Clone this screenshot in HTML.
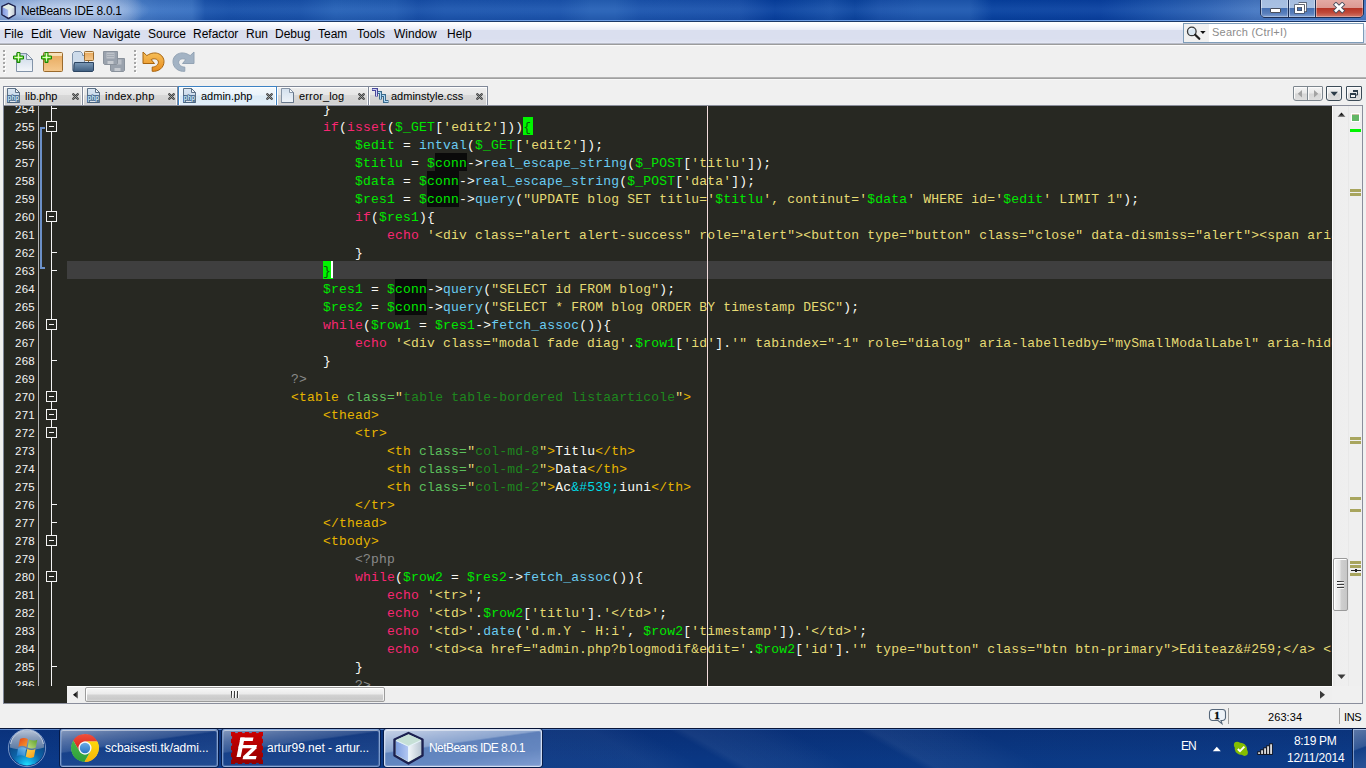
<!DOCTYPE html>
<html><head><meta charset="utf-8"><title>NetBeans IDE 8.0.1</title>
<style>
*{box-sizing:border-box;margin:0;padding:0}
html,body{width:1366px;height:768px;overflow:hidden;background:#f0f0f0;font-family:"Liberation Sans",sans-serif;}
.abs{position:absolute}
#titlebar{position:absolute;left:0;top:0;width:1366px;height:22px;overflow:hidden;background:linear-gradient(90deg,#7fa2d6 0px,#87a8da 110px,#6d97d2 128px,#437ac6 142px,#3b73c3 160px,#3770c1 192px,#1a54ad 205px,#154fa9 230px,#1852ab 300px,#2460b6 335px,#215cb3 395px,#164fa9 418px,#1b55ae 445px,#1a54ae 560px,#2560b6 590px,#2560b6 615px,#1a54ae 640px,#1850ab 740px,#063f9e 775px,#0d47a3 800px,#1650aa 830px,#0a449f 855px,#1851ab 880px,#1d58b0 920px,#1d58b0 970px,#0641a0 992px,#0840a0 1100px,#1851ab 1150px,#2c62b5 1205px,#4577c2 1255px,#4a7cc6 1366px)}
#titlebar .streak{position:absolute;top:0;height:22px;}
#titletext{position:absolute;left:21px;top:4px;font-size:12px;letter-spacing:-0.3px;line-height:15px;color:#000;white-space:pre}
#menubar{position:absolute;left:0;top:22px;width:1366px;height:21px;background:linear-gradient(180deg,#ffffff 0,#fcfcfe 2px,#f3f4fb 5px,#e9ecf7 8px,#dadfef 8.5px,#dadfef 17px,#dfe3f2 20px,#e6e9f5 21px)}
#menubar span{position:absolute;top:5px;font-size:12px;line-height:15px;color:#000;white-space:pre}
#menuline{position:absolute;left:0;top:43px;width:1366px;height:3px;background:linear-gradient(180deg,#b9bdc9 0,#b9bdc9 1px,#9c9c9c 1px,#9c9c9c 2px,#fdfdfd 2px,#fdfdfd 3px)}
#toolbar{position:absolute;left:0;top:0;width:0;height:0}
.grip{position:absolute;width:3px;height:24px;background-image:repeating-linear-gradient(180deg,#a6a6a6 0,#a6a6a6 2px,transparent 2px,transparent 4px),repeating-linear-gradient(180deg,#fff 0,#fff 2px,transparent 2px,transparent 4px);background-size:2px 22px,2px 22px;background-position:0 0,1px 1px;background-repeat:no-repeat}
#toolline{position:absolute;left:0;top:77px;width:1366px;height:3px;background:linear-gradient(180deg,#b4b4b4 0,#b4b4b4 1px,#a0a0a0 1px,#a0a0a0 2px,#f8f8f8 2px,#f8f8f8 3px)}
/* tabs */
.tab{position:absolute;top:86px;height:19px;border:1px solid #808898;border-bottom:none;background:linear-gradient(180deg,#f0f0f0 0,#ebebeb 2px,#e6e6e6 8px,#d8d8d8 8.500px,#d0d0d0 17px,#e2e2e2 18px);box-shadow:inset 1px 1px 0 #fdfdfd,inset -1px 0 0 #f6f6f6;font-size:11px;color:#000}
.tab.active{height:20px;background:linear-gradient(180deg,#f4f9fd 0,#eaf3fa 8px,#dcebf6 9px,#e3eff8 19px);border-color:#3d82c4;box-shadow:inset 1px 1px 0 #fff,inset -1px 0 0 #fff}
.tab .lbl{position:absolute;top:2px;line-height:15px;white-space:pre}
.tab .ti{position:absolute;left:3px;top:1px}
.tab .tx{position:absolute;top:6px}
/* editor */
#editor{position:absolute;left:4px;top:106px;width:1328px;height:580px;background:#272822;overflow:hidden}
#edtop{position:absolute;left:3px;top:105px;width:1360px;height:1px;background:#8a8e9c}
#nums{position:absolute;left:0;top:-6px;width:31px;text-align:right;font-family:"Liberation Sans",sans-serif;font-size:11.500px;letter-spacing:.25px;line-height:18px;color:#f4f4f4}
#nums div{height:18px}
#gutline{position:absolute;left:34px;top:0;width:1px;height:580px;background:#b4b4b4}
.fl{position:absolute;left:47px;top:0;width:1px;height:580px;background:#f4f4f4}
.ft{position:absolute;left:47px;width:6px;height:1px;background:#f4f4f4}
.fb{position:absolute;left:42px;width:11px;height:11px;border:1px solid #f4f4f4;background:#272822}
.fb i{position:absolute;left:2px;top:4px;width:5px;height:1px;background:#f4f4f4}
.bk1{position:absolute;left:36px;top:21px;width:2px;height:142px;background:#6b90c8}
.bk2{position:absolute;left:36px;top:21px;width:5px;height:2px;background:#6b90c8}
.bk3{position:absolute;left:36px;top:161px;width:5px;height:2px;background:#6b90c8}
.occ{position:absolute;height:18px;background:#0a0a0a}
.brk{position:absolute;height:18px;background:#00f400}
#code{position:absolute;left:63px;top:-5px;font-family:"Liberation Mono",monospace;font-size:13px;letter-spacing:0.2px;line-height:18px;color:#f8f8f2;white-space:pre}
#code .ln{height:18px;white-space:pre}
#curline{position:absolute;left:63px;top:155px;width:1265px;height:18px;background:#3f3f3f}
.k{color:#f92672}.v{color:#00e800}.f{color:#6accf2}.s{color:#e6db74}.t{color:#e6b400}.a{color:#5cc05c}.av{color:#1e861e}.c{color:#8a8a8a}.e{color:#00dce8}
.br{color:#0a5c0a}
#margin{position:absolute;left:703px;top:0;width:1px;height:580px;background:#f2dcdc}
#caret{position:absolute;left:327px;top:155px;width:2px;height:17px;background:#fff}
.nb{position:absolute;top:86px;height:15px;border:1px solid #3c4b57;border-radius:1px 1px 3px 3px;background:linear-gradient(180deg,#f4f4f4 0,#e9e9e9 6px,#d6d6d6 7px,#dedede 13px);box-shadow:inset 1px 1px 0 #fbfbfb,inset -1px 0 0 #f0f0f0}
.ob{position:absolute;left:1px;width:11px;height:3px;background:#a8a55e}
/* scrollbars */
#vsb{position:absolute;left:1332px;top:106px;width:16px;height:580px;background:linear-gradient(90deg,#e6e6e6 0,#e9e9e9 2px,#eeeeee 4px,#efefef 16px)}
#stripe{position:absolute;left:1348px;top:106px;width:14px;height:580px;background:#efefef;border-left:1px solid #e8e8e8}
#rborder{position:absolute;left:1362px;top:105px;width:1px;height:598px;background:#8a8d9b}
#hsb{position:absolute;left:67px;top:686px;width:1265px;height:17px;background:#efefef}
#gutbot{position:absolute;left:4px;top:686px;width:63px;height:17px;background:#272822}
#bborder{position:absolute;left:3px;top:703px;width:1360px;height:1px;background:#8a8e9c}
#lborder{position:absolute;left:3px;top:105px;width:1px;height:598px;background:#808898}
#status{position:absolute;left:0;top:704px;width:1366px;height:24px;background:#f0f0f0;font-size:12px;color:#000}
#taskbar{position:absolute;left:0;top:728px;width:1366px;height:40px;overflow:hidden;background:linear-gradient(90deg,#0c3a88 0,#0b3986 300px,#0a3783 700px,#0b3984 1000px,#0d3c88 1366px)}
.tb{position:absolute;top:1px;height:38px;border:1px solid rgba(150,180,225,.75);border-radius:3px;background:linear-gradient(172deg,rgba(255,255,255,.50) 0,rgba(255,255,255,.30) 20%,rgba(255,255,255,.17) 38%,rgba(255,255,255,.05) 41%,rgba(255,255,255,.09) 100%);box-shadow:inset 0 1px 0 rgba(255,255,255,.38),inset 0 0 0 1px rgba(255,255,255,.16),0 0 0 1px rgba(4,16,48,.7)}
.tb.act{border-color:rgba(215,226,244,.95);background:linear-gradient(172deg,rgba(242,247,255,.82) 0,rgba(228,238,255,.72) 20%,rgba(213,230,254,.64) 38%,rgba(180,207,248,.50) 41%,rgba(185,210,250,.52) 70%,rgba(200,218,255,.62) 100%)}
.tl{position:absolute;top:13px;font-size:12px;line-height:15px;color:#fff;white-space:pre;letter-spacing:-.2px}
</style></head><body>
<div id="titlebar"><div class="abs" style="left:0;top:0;width:150px;height:20px;background:radial-gradient(ellipse 84px 20px at 66px 10px,rgba(205,220,244,.85) 0,rgba(178,200,234,.75) 50%,rgba(150,180,226,.35) 80%,rgba(130,165,218,0) 100%)"></div>
<div class="abs" style="left:0;top:0;width:1366px;height:20px;background:linear-gradient(180deg,rgba(0,0,30,.06) 0,rgba(255,255,255,.05) 45%,rgba(255,255,255,.04) 60%,rgba(0,0,40,.08) 100%)"></div>
<div class="abs" style="left:0;top:20px;width:1366px;height:1px;background:linear-gradient(90deg,#c2d2ec 0,#b5c9ea 120px,#6d9be0 220px,#6a9ae2 1200px,#8db0e6 1366px)"></div>
<div class="abs" style="left:0;top:21px;width:1366px;height:1px;background:#1b3868"></div>
<svg class="abs" style="left:0;top:2px" width="18" height="18" viewBox="0 0 18 18">
<defs><linearGradient id="cl" x1="0" x2="1"><stop offset="0" stop-color="#8198e0"/><stop offset="1" stop-color="#b4c6f0"/></linearGradient>
<linearGradient id="cr" x1="0" x2="1"><stop offset="0" stop-color="#f4f8fa"/><stop offset="1" stop-color="#c3cdd6"/></linearGradient></defs>
<path d="M8.5 1.5 L15 4.6 L15 12.6 L8.5 16.4 L2 12.6 L2 4.6 Z" fill="#dfeae4" stroke="#20244e" stroke-width="1.700" stroke-linejoin="round"/>
<path d="M2.6 5.2 L8.5 8 L8.5 15.6 L2.6 12.2 Z" fill="url(#cl)"/>
<path d="M8.5 8 L14.4 5.2 L14.4 12.2 L8.5 15.6 Z" fill="url(#cr)"/>
<path d="M2.8 4.8 L8.5 2.2 L14.2 4.8 L8.5 7.6 Z" fill="#e2ede6"/>
</svg>
<!-- window buttons -->
<div class="abs" style="left:1260px;top:-1px;width:104px;height:19px;border:1px solid #1c2e55;border-radius:0 0 5px 5px;overflow:hidden;background:#1c2e55">
 <div class="abs" style="left:0;top:0;width:27px;height:17px;background:linear-gradient(180deg,#a5bde0 0,#a9c1e3 48%,#4670b2 50%,#5a80bd 80%,#86a4d4 100%);box-shadow:inset 1px 0 0 rgba(255,255,255,.45),inset -1px 0 0 rgba(255,255,255,.35),inset 0 -1px 0 rgba(255,255,255,.3)"></div>
 <div class="abs" style="left:28px;top:0;width:26px;height:17px;background:linear-gradient(180deg,#a5bde0 0,#a9c1e3 48%,#4670b2 50%,#5a80bd 80%,#86a4d4 100%);box-shadow:inset 1px 0 0 rgba(255,255,255,.45),inset -1px 0 0 rgba(255,255,255,.35),inset 0 -1px 0 rgba(255,255,255,.3)"></div>
 <div class="abs" style="left:55px;top:0;width:47px;height:17px;background:linear-gradient(180deg,#e3a9a3 0,#dc9891 48%,#b63527 50%,#c04a3a 75%,#d0796c 100%);box-shadow:inset 1px 0 0 rgba(255,255,255,.4),inset -1px 0 0 rgba(255,255,255,.3),inset 0 -1px 0 rgba(255,255,255,.3)"></div>
</div>
<div class="abs" style="left:1270px;top:8px;width:11px;height:5px;background:#fff;border:1px solid #4a4f5c;border-radius:1px"></div>
<svg class="abs" style="left:1294px;top:2px" width="14" height="13" viewBox="0 0 14 13">
<path d="M4.6 1.8h6.8v6.6h-1.6" fill="none" stroke="#454b58" stroke-width="3"/>
<path d="M4.6 1.8h6.8v6.6h-1.6" fill="none" stroke="#fff" stroke-width="1.5"/>
<rect x="2" y="4" width="7" height="6" fill="none" stroke="#454b58" stroke-width="3.4"/>
<rect x="2" y="4" width="7" height="6" fill="none" stroke="#fff" stroke-width="2"/>
</svg>
<svg class="abs" style="left:1332px;top:2px" width="15" height="12" viewBox="0 0 15 12">
<path d="M4 2.6 L10.2 8.6 M10.2 2.6 L4 8.6" stroke="#4b4f5e" stroke-width="4.4" stroke-linecap="square"/>
<path d="M4 2.6 L10.2 8.6 M10.2 2.6 L4 8.6" stroke="#fff" stroke-width="2.7" stroke-linecap="square"/>
</svg>
</div>
<div id="titletext">NetBeans IDE 8.0.1</div>
<div id="menubar">
<span style="left:4px">File</span><span style="left:31px">Edit</span><span style="left:60px">View</span><span style="left:93px">Navigate</span><span style="left:148px">Source</span><span style="left:193px">Refactor</span><span style="left:246px">Run</span><span style="left:275px">Debug</span><span style="left:318px">Team</span><span style="left:357px">Tools</span><span style="left:394px">Window</span><span style="left:447px">Help</span>
<div class="abs" style="left:1183px;top:1px;width:181px;height:20px;border:1px solid #7f9db9;background:#fff">
<div class="abs" style="left:0;top:0;width:25px;height:18px;background:#f0f0f0"></div>
<svg class="abs" style="left:1px;top:1px" width="22" height="17" viewBox="0 0 22 17">
<circle cx="6.800" cy="6.400" r="4.300" fill="#dbe8f3" stroke="#3a3a3a" stroke-width="1.300"/>
<path d="M4.200 5.200a3 3 0 0 1 3-1.600" stroke="#fff" stroke-width="1" fill="none"/>
<path d="M10.200 9.800L14.300 13.800" stroke="#1e1e1e" stroke-width="2.200" stroke-linecap="round"/>
<path d="M15.200 6h5.400l-2.700 3z" fill="#111"/>
</svg>
<span style="left:28px;top:1px;font-size:11px;letter-spacing:.22px;color:#8c8c8c;line-height:14px">Search (Ctrl+I)</span>
</div>

</div>
<div id="menuline"></div>
<div id="toolbar"><!-- grips -->
<div class="grip" style="left:3px;top:50px"></div>
<div class="grip" style="left:134px;top:50px"></div>
<!-- new file -->
<svg class="abs" style="left:12px;top:50px" width="24" height="24" viewBox="0 0 24 24">
<defs>
<linearGradient id="pg" x1="0" y1="0" x2="0" y2="1"><stop offset="0" stop-color="#c9d6e6"/><stop offset="1" stop-color="#f4f7fb"/></linearGradient>
<linearGradient id="plus" x1="0" y1="0" x2="0" y2="1"><stop offset="0" stop-color="#c8f890"/><stop offset=".5" stop-color="#6fe02c"/><stop offset="1" stop-color="#35b814"/></linearGradient>
<linearGradient id="bx" x1="0" y1="0" x2="0" y2="1"><stop offset="0" stop-color="#f9e6c4"/><stop offset=".18" stop-color="#f6dcb2"/><stop offset=".2" stop-color="#e9ad63"/><stop offset="1" stop-color="#f5c98e"/></linearGradient>
<linearGradient id="fd" x1="0" y1="0" x2="0" y2="1"><stop offset="0" stop-color="#7c9ab8"/><stop offset="1" stop-color="#3f5e80"/></linearGradient>
<linearGradient id="un" x1="0" y1="0" x2="0" y2="1"><stop offset="0" stop-color="#f7c15a"/><stop offset="1" stop-color="#e88c1e"/></linearGradient>
</defs>
<path d="M4.5 3.5h10l6 6v12h-16z" fill="url(#pg)" stroke="#8293a8" stroke-width="1"/>
<path d="M14.5 3.5v6h6z" fill="#e9eff6" stroke="#8293a8" stroke-width="1" stroke-linejoin="round"/>
<path d="M5 2.500h3v3.500h3.500v3h-3.500v3.500h-3v-3.500h-3.500v-3h3.500z" fill="url(#plus)" stroke="#1b8708" stroke-width="1"/><path d="M6.500 3.600v7.800M2.600 7.500h7.800" fill="none" stroke="#f4ffe4" stroke-width="1" opacity=".8"/>
</svg>
<!-- new project -->
<svg class="abs" style="left:40px;top:50px" width="24" height="24" viewBox="0 0 24 24">
<rect x="3.5" y="2.5" width="19" height="19" rx="1" fill="url(#bx)" stroke="#9a6a2c" stroke-width="1"/>
<path d="M5 2.500h3v3.500h3.500v3h-3.500v3.500h-3v-3.500h-3.500v-3h3.500z" fill="url(#plus)" stroke="#1b8708" stroke-width="1"/><path d="M6.500 3.600v7.800M2.600 7.500h7.800" fill="none" stroke="#f4ffe4" stroke-width="1" opacity=".8"/>
</svg>
<!-- open project -->
<svg class="abs" style="left:71px;top:50px" width="24" height="24" viewBox="0 0 24 24">
<path d="M1.500 20.500v-17l2-2h6l2 2v2h2v8h-10.500z" fill="#cddbea" stroke="#7f93aa" stroke-width="1"/>
<rect x="13.5" y="1.5" width="9" height="9" rx=".8" fill="url(#bx)" stroke="#9a6a2c"/>
<path d="M17.5 10.5v3" stroke="#8a6a3a" stroke-width="1"/>
<path d="M2.500 21.500l1-9h19v8l-1 1z" fill="url(#fd)" stroke="#2c4562" stroke-width="1" stroke-linejoin="round"/>
</svg>
<!-- save all (disabled) -->
<svg class="abs" style="left:102px;top:50px" width="24" height="24" viewBox="0 0 24 24">
<g>
<path d="M8.5 8.500h14v12l-1 1h-12l-1-1z" fill="#9aa2ad" stroke="#8a929c"/>
<rect x="11.500" y="9.500" width="8" height="5" fill="#b9bec6"/>
<rect x="12.500" y="18" width="6" height="3" fill="#c6cad0"/>
<path d="M1.500 1.500h14v12l-1 1h-12l-1-1z" fill="#9aa2ad" stroke="#8a929c"/>
<rect x="4.500" y="2.500" width="8" height="6" fill="#bdc2c9"/>
<path d="M5 4.500h7M5 6.500h7" stroke="#a4abb4" stroke-width="1"/>
<rect x="5.500" y="11" width="6" height="3" fill="#c6cad0"/>
</g>
</svg>
<!-- undo -->
<svg class="abs" style="left:142px;top:50px" width="24" height="24" viewBox="0 0 24 24">
<path d="M1 2 L1 13.500 L12.500 13.500 L9.200 9.600 C11 8.200 16.400 8.500 16.400 12.200 C16.400 15 13.500 17 10.200 17.100 L10.200 21.300 C17 21.800 22 17.500 22 11.500 C22 5 14 -0.500 4.800 5.600 Z" fill="url(#un)" stroke="#a8650f" stroke-width="1" stroke-linejoin="round"/>
</svg>
<!-- redo (disabled) -->
<svg class="abs" style="left:172px;top:50px" width="24" height="24" viewBox="0 0 24 24">
<path d="M 22 2 L 22 13.5 L 10.5 13.5 L 13.8 9.6 C 12 8.2 6.6 8.5 6.6 12.2 C 6.6 15 9.5 17 12.8 17.1 L 12.8 21.3 C 6 21.8 1 17.5 1 11.5 C 1 5 9 -0.5 18.2 5.6 Z" fill="#a3b3c4" stroke="#93a3b4" stroke-width="1" stroke-linejoin="round"/>
</svg>
</div>
<div id="toolline"></div>
<svg width="0" height="0" style="position:absolute"><defs>
<linearGradient id="phpg" x1="0" y1="0" x2="0" y2="1"><stop offset="0" stop-color="#dbe7f3"/><stop offset="1" stop-color="#bcd0e6"/></linearGradient>
<linearGradient id="pgg" x1="0" y1="0" x2="0" y2="1"><stop offset="0" stop-color="#d3e0ee"/><stop offset="1" stop-color="#eef3f9"/></linearGradient>
<symbol id="iphp" viewBox="0 0 13 15">
<path d="M0.500 0.500h8l4 4v10h-12z" fill="url(#phpg)" stroke="#5c7186" stroke-width="1"/>
<path d="M8.500 0.500v4h4z" fill="#f0f5fa" stroke="#5c7186" stroke-width="1" stroke-linejoin="round"/>
<rect x="1" y="7" width="11" height="7" fill="#47688c" opacity=".75"/>
<text x="0.600" y="12.300" font-family="Liberation Sans" font-weight="bold" font-size="7.600" fill="#cdeafc" stroke="#33567a" stroke-width="1.100" paint-order="stroke" textLength="11.600" lengthAdjust="spacingAndGlyphs">php</text>
<path d="M3 13.400h5.500" stroke="#fff" stroke-width=".9"/>
<path d="M0.500 14.500h12" stroke="#4a6480" stroke-width="1"/>
</symbol>
<symbol id="ipage" viewBox="0 0 13 15">
<path d="M0.500 0.500h8l4 4v10h-12z" fill="url(#pgg)" stroke="#8694a6" stroke-width="1"/>
<path d="M8.500 0.500v4h4z" fill="#f6f9fc" stroke="#8694a6" stroke-width="1" stroke-linejoin="round"/>
<path d="M0.500 14.500h12v-10" stroke="#66768a" stroke-width="1" fill="none"/>
</symbol>
<symbol id="icss" viewBox="0 0 17 17">
<path d="M9 8.500H12.500V14.500H16.500" fill="none" stroke="#3b6b8c" stroke-width="3" stroke-linejoin="miter"/>
<path d="M9.500 8.500H12.500V14.500H16" fill="none" stroke="#b4dcfa" stroke-width="1"/>
<path d="M5 5.500H8.500V12.500" fill="none" stroke="#3b6b8c" stroke-width="3"/>
<path d="M5.500 5.500H8.500V12" fill="none" stroke="#b4dcfa" stroke-width="1"/>
<path d="M0 2.500H4.500V9.500" fill="none" stroke="#47479a" stroke-width="3"/>
<path d="M0.500 2.500H4.500V9" fill="none" stroke="#d2d2f4" stroke-width="1"/>
</symbol>
<symbol id="ix" viewBox="0 0 7 7">
<path d="M1.300 1.300L5.700 5.700M5.700 1.300L1.300 5.700" stroke="#3a3a3a" stroke-width="2.300" stroke-linecap="round"/>
<path d="M1.500 1.500L5.500 5.500M5.500 1.500L1.500 5.500" stroke="#c4cccc" stroke-width="0.700" stroke-linecap="round" stroke-dasharray="0.9 0.9"/>
</symbol>
</defs></svg>
<div class="tab" style="left:3px;width:80px"><svg class="ti" width="13" height="15"><use href="#iphp"/></svg><span class="lbl" style="left:21px">lib.php</span><svg class="tx" style="left:68px" width="7" height="7"><use href="#ix"/></svg></div>
<div class="tab" style="left:82px;width:96px"><svg class="ti" style="left:4px" width="13" height="15"><use href="#iphp"/></svg><span class="lbl" style="left:22px;letter-spacing:.2px">index.php</span><svg class="tx" style="left:85px" width="7" height="7"><use href="#ix"/></svg></div>
<div class="tab" style="left:276px;width:93px"><svg class="ti" style="left:4px" width="13" height="15"><use href="#ipage"/></svg><span class="lbl" style="left:22px;letter-spacing:.15px">error_log</span><svg class="tx" style="left:81px" width="7" height="7"><use href="#ix"/></svg></div>
<div class="tab" style="left:368px;width:120px"><svg class="ti" style="left:3px;top:0px" width="17" height="17"><use href="#icss"/></svg><span class="lbl" style="left:22px">adminstyle.css</span><svg class="tx" style="left:107px" width="7" height="7"><use href="#ix"/></svg></div>
<div class="tab active" style="left:178px;width:99px"><svg class="ti" style="left:4px" width="13" height="15"><use href="#iphp"/></svg><span class="lbl" style="left:22px">admin.php</span><svg class="tx" style="left:87px" width="7" height="7"><use href="#ix"/></svg></div>

<div class="nb" style="left:1293px;width:30px;border-color:#7d868e"></div>
<div class="abs" style="left:1307px;top:87px;width:1px;height:14px;background:#7d868e"></div>
<div class="abs" style="left:1308px;top:87px;width:1px;height:13px;background:#fafafa"></div>
<svg class="abs" style="left:1293px;top:86px" width="30" height="15" viewBox="0 0 30 15"><path d="M9 4v7.400l-4.200-3.700z" fill="#a2a2a2"/><path d="M21 4v7.400l4.200-3.700z" fill="#a2a2a2"/></svg>
<div class="nb" style="left:1326px;width:16px;border-color:#3c4b57"></div>
<svg class="abs" style="left:1326px;top:86px" width="16" height="15" viewBox="0 0 16 15"><path d="M4.500 5.800h7.400l-3.700 4.200z" fill="#2d3c48"/></svg>
<div class="nb" style="left:1346px;width:16px;border-color:#3c4b57"></div>
<svg class="abs" style="left:1346px;top:86px" width="16" height="15" viewBox="0 0 16 15">
<path d="M7.500 5.500h4v3.500h-1.500" fill="none" stroke="#2d3c48" stroke-width="1"/><path d="M7 5h5" stroke="#2d3c48" stroke-width="2"/>
<rect x="4.500" y="8" width="5" height="3.500" fill="#f4f4f4" stroke="#2d3c48" stroke-width="1"/><path d="M4 8h6" stroke="#2d3c48" stroke-width="2"/>
</svg>

<div id="edtop"></div>
<div id="editor">
<div id="curline"></div>
<div id="nums"><div>254</div>
<div>255</div>
<div>256</div>
<div>257</div>
<div>258</div>
<div>259</div>
<div>260</div>
<div>261</div>
<div>262</div>
<div>263</div>
<div>264</div>
<div>265</div>
<div>266</div>
<div>267</div>
<div>268</div>
<div>269</div>
<div>270</div>
<div>271</div>
<div>272</div>
<div>273</div>
<div>274</div>
<div>275</div>
<div>276</div>
<div>277</div>
<div>278</div>
<div>279</div>
<div>280</div>
<div>281</div>
<div>282</div>
<div>283</div>
<div>284</div>
<div>285</div>
<div>286</div></div>
<div id="gutline"></div>
<div class="fl"></div><div class="ft" style="top:2px"></div><div class="fb" style="top:15px"><i></i></div><div class="fb" style="top:105px"><i></i></div><div class="ft" style="top:146px"></div><div class="ft" style="top:164px"></div><div class="fb" style="top:213px"><i></i></div><div class="ft" style="top:254px"></div><div class="fb" style="top:285px"><i></i></div><div class="fb" style="top:303px"><i></i></div><div class="fb" style="top:321px"><i></i></div><div class="ft" style="top:398px"></div><div class="ft" style="top:416px"></div><div class="fb" style="top:429px"><i></i></div><div class="fb" style="top:465px"><i></i></div><div class="ft" style="top:560px"></div><div class="bk1"></div><div class="bk2"></div><div class="bk3"></div>
<div class="occ" style="left:431px;top:47px;width:32px"></div><div class="occ" style="left:423px;top:65px;width:32px"></div><div class="occ" style="left:423px;top:83px;width:32px"></div><div class="occ" style="left:391px;top:173px;width:32px"></div><div class="occ" style="left:391px;top:191px;width:32px"></div><div class="brk" style="left:519px;top:11px;width:10px"></div><div class="brk" style="left:319px;top:155px;width:10px"></div>
<div id="code"><div class="ln">                                }</div><div class="ln">                                <span class="k">if</span>(<span class="k">isset</span>(<span class="v">$_GET</span>[<span class="s">&#x27;edit2&#x27;</span>]))<span class="br">{</span></div><div class="ln">                                    <span class="v">$edit</span> = <span class="f">intval</span>(<span class="v">$_GET</span>[<span class="s">&#x27;edit2&#x27;</span>]);</div><div class="ln">                                    <span class="v">$titlu</span> = <span class="v">$conn</span>-&gt;<span class="f">real_escape_string</span>(<span class="v">$_POST</span>[<span class="s">&#x27;titlu&#x27;</span>]);</div><div class="ln">                                    <span class="v">$data</span> = <span class="v">$conn</span>-&gt;<span class="f">real_escape_string</span>(<span class="v">$_POST</span>[<span class="s">&#x27;data&#x27;</span>]);</div><div class="ln">                                    <span class="v">$res1</span> = <span class="v">$conn</span>-&gt;<span class="f">query</span>(<span class="s">&quot;UPDATE blog SET titlu=&#x27;</span><span class="v">$titlu</span><span class="s">&#x27;, continut=&#x27;</span><span class="v">$data</span><span class="s">&#x27; WHERE id=&#x27;</span><span class="v">$edit</span><span class="s">&#x27; LIMIT 1&quot;</span>);</div><div class="ln">                                    <span class="k">if</span>(<span class="v">$res1</span>){</div><div class="ln">                                        <span class="k">echo</span> <span class="s">&#x27;&lt;div class=&quot;alert alert-success&quot; role=&quot;alert&quot;&gt;&lt;button type=&quot;button&quot; class=&quot;close&quot; data-dismiss=&quot;alert&quot;&gt;&lt;span aria-hidden=&quot;true&quot;&gt;&amp;times;&lt;/span&gt;</span></div><div class="ln">                                    }</div><div class="ln cur">                                <span class="br">}</span></div><div class="ln">                                <span class="v">$res1</span> = <span class="v">$conn</span>-&gt;<span class="f">query</span>(<span class="s">&quot;SELECT id FROM blog&quot;</span>);</div><div class="ln">                                <span class="v">$res2</span> = <span class="v">$conn</span>-&gt;<span class="f">query</span>(<span class="s">&quot;SELECT * FROM blog ORDER BY timestamp DESC&quot;</span>);</div><div class="ln">                                <span class="k">while</span>(<span class="v">$row1</span> = <span class="v">$res1</span>-&gt;<span class="f">fetch_assoc</span>()){</div><div class="ln">                                    <span class="k">echo</span> <span class="s">&#x27;&lt;div class=&quot;modal fade diag&#x27;</span>.<span class="v">$row1</span>[<span class="s">&#x27;id&#x27;</span>].<span class="s">&#x27;&quot; tabindex=&quot;-1&quot; role=&quot;dialog&quot; aria-labelledby=&quot;mySmallModalLabel&quot; aria-hidden=&quot;true&quot;&gt;</span></div><div class="ln">                                }</div><div class="ln">                            <span class="c">?&gt;</span></div><div class="ln">                            <span class="t">&lt;table</span> <span class="a">class</span><span class="a">=</span><span class="s">&quot;</span><span class="av">table table-bordered listaarticole</span><span class="s">&quot;</span><span class="t">&gt;</span></div><div class="ln">                                <span class="t">&lt;thead</span><span class="t">&gt;</span></div><div class="ln">                                    <span class="t">&lt;tr</span><span class="t">&gt;</span></div><div class="ln">                                        <span class="t">&lt;th</span> <span class="a">class</span><span class="a">=</span><span class="s">&quot;</span><span class="av">col-md-8</span><span class="s">&quot;</span><span class="t">&gt;</span>Titlu<span class="t">&lt;/th</span><span class="t">&gt;</span></div><div class="ln">                                        <span class="t">&lt;th</span> <span class="a">class</span><span class="a">=</span><span class="s">&quot;</span><span class="av">col-md-2</span><span class="s">&quot;</span><span class="t">&gt;</span>Data<span class="t">&lt;/th</span><span class="t">&gt;</span></div><div class="ln">                                        <span class="t">&lt;th</span> <span class="a">class</span><span class="a">=</span><span class="s">&quot;</span><span class="av">col-md-2</span><span class="s">&quot;</span><span class="t">&gt;</span>Ac<span class="e">&amp;#539;</span>iuni<span class="t">&lt;/th</span><span class="t">&gt;</span></div><div class="ln">                                    <span class="t">&lt;/tr</span><span class="t">&gt;</span></div><div class="ln">                                <span class="t">&lt;/thead</span><span class="t">&gt;</span></div><div class="ln">                                <span class="t">&lt;tbody</span><span class="t">&gt;</span></div><div class="ln">                                    <span class="c">&lt;?php</span></div><div class="ln">                                    <span class="k">while</span>(<span class="v">$row2</span> = <span class="v">$res2</span>-&gt;<span class="f">fetch_assoc</span>()){</div><div class="ln">                                        <span class="k">echo</span> <span class="s">&#x27;&lt;tr&gt;&#x27;</span>;</div><div class="ln">                                        <span class="k">echo</span> <span class="s">&#x27;&lt;td&gt;&#x27;</span>.<span class="v">$row2</span>[<span class="s">&#x27;titlu&#x27;</span>].<span class="s">&#x27;&lt;/td&gt;&#x27;</span>;</div><div class="ln">                                        <span class="k">echo</span> <span class="s">&#x27;&lt;td&gt;&#x27;</span>.<span class="f">date</span>(<span class="s">&#x27;d.m.Y - H:i&#x27;</span>, <span class="v">$row2</span>[<span class="s">&#x27;timestamp&#x27;</span>]).<span class="s">&#x27;&lt;/td&gt;&#x27;</span>;</div><div class="ln">                                        <span class="k">echo</span> <span class="s">&#x27;&lt;td&gt;&lt;a href=&quot;admin.php?blogmodif&amp;edit=&#x27;</span>.<span class="v">$row2</span>[<span class="s">&#x27;id&#x27;</span>].<span class="s">&#x27;&quot; type=&quot;button&quot; class=&quot;btn btn-primary&quot;&gt;Editeaz&amp;#259;&lt;/a&gt; &lt;a href=&quot;#&quot; &gt;</span></div><div class="ln">                                    }</div><div class="ln">                                    <span class="c">?&gt;</span></div></div>
<div id="margin"></div>
<div id="caret"></div>
</div>
<div id="vsb"><div class="abs" style="left:0;top:0;width:1px;height:580px;background:#fdfdfd"></div>
<svg class="abs" style="left:4px;top:5px" width="10" height="7" viewBox="0 0 10 7"><defs><linearGradient id="ua" x1="0" y1="0" x2="0" y2="1"><stop offset="0" stop-color="#000"/><stop offset=".55" stop-color="#2a2a2a"/><stop offset="1" stop-color="#9a9a9a"/></linearGradient></defs><path d="M1.500 6L5.500 1.500L9.500 6z" fill="url(#ua)"/></svg>
<svg class="abs" style="left:4px;top:567px" width="10" height="7" viewBox="0 0 10 7"><path d="M1.500 1.500L5.500 6L9.500 1.500z" fill="#3a3a3a"/></svg>
<div class="abs" style="left:1px;top:452px;width:15px;height:53px;border:1px solid #9a9a9a;border-radius:2px;background:linear-gradient(90deg,#f6f6f6 0,#e8e8e8 45%,#cfcfcf 55%,#c6c6c6 100%);box-shadow:inset 1px 1px 0 #fff"></div>
<div class="abs" style="left:5px;top:475px;width:7px;height:1px;background:linear-gradient(90deg,#1e1e1e,#6a6a6a);box-shadow:0 3px 0 #3c3c3c,0 6px 0 #3c3c3c,0 1px 0 #f8f8f8,0 4px 0 #f8f8f8,0 7px 0 #f8f8f8"></div>
</div>
<div id="stripe"><div class="abs" style="left:2px;top:7px;width:9px;height:9px;background:#fff"></div>
<div class="abs" style="left:3px;top:8px;width:7px;height:7px;background:#62b766;border-top:1px solid #c9bfa6"></div>
<div class="abs" style="left:1px;top:23px;width:11px;height:3px;background:#00f400"></div>
<div class="ob" style="top:83px"></div><div class="ob" style="top:87px"></div>
<div class="ob" style="top:331px"></div><div class="ob" style="top:335px"></div>
<div class="ob" style="top:391px"></div><div class="ob" style="top:403px"></div>
<div class="ob" style="top:455px"></div><div class="ob" style="top:459px"></div><div class="ob" style="top:467px"></div>
<div class="abs" style="left:2px;top:464px;width:10px;height:1px;background:#222"></div>
<div class="abs" style="left:6px;top:463px;width:2px;height:3px;background:#222"></div>
</div>
<div id="rborder"></div>
<div id="gutbot"></div>
<div id="hsb"><div class="abs" style="left:0;top:0;width:1265px;height:1px;background:#fdfdfd"></div>
<svg class="abs" style="left:5px;top:4px" width="7" height="10" viewBox="0 0 7 10"><defs><linearGradient id="la" x1="0" y1="0" x2="1" y2="0"><stop offset="0" stop-color="#000"/><stop offset=".6" stop-color="#222"/><stop offset="1" stop-color="#8a8a8a"/></linearGradient></defs><path d="M6 0.800L1 4.800L6 8.800z" fill="url(#la)"/></svg>
<svg class="abs" style="left:1252px;top:4px" width="7" height="10" viewBox="0 0 7 10"><path d="M1 0.800L6 4.800L1 8.800z" fill="#3a3a3a"/></svg>
<div class="abs" style="left:18px;top:1px;width:300px;height:15px;border:1px solid #9c9c9c;border-radius:2px;background:linear-gradient(180deg,#f7f7f7 0,#ebebeb 45%,#d2d2d2 55%,#c9c9c9 85%,#d8d8d8 100%);box-shadow:inset 1px 1px 0 #fff,inset -1px 0 0 #f4f4f4"></div>
<div class="abs" style="left:164px;top:5px;width:1px;height:7px;background:linear-gradient(180deg,#1e1e1e,#6a6a6a);box-shadow:3px 0 0 #3c3c3c,6px 0 0 #3c3c3c,1px 0 0 #f8f8f8,4px 0 0 #f8f8f8,7px 0 0 #f8f8f8"></div>
</div>
<div id="bborder"></div>
<div id="lborder"></div>
<div id="status"><svg class="abs" style="left:1208px;top:4px" width="20" height="20" viewBox="0 0 20 20">
<path d="M4.500 1.500h10a3 3 0 0 1 3 3v5a3 3 0 0 1 -3 3h-1.500l1 3.200l-4-3.200h-5.500a3 3 0 0 1 -3-3v-5a3 3 0 0 1 3-3z" fill="#eef3f8" stroke="#56677a" stroke-width="1.100"/>
<text x="6.300" y="10.900" font-family="Liberation Serif" font-weight="bold" font-size="11" fill="#000" stroke="#000" stroke-width=".35">1</text>
</svg>
<div class="abs" style="left:1228px;top:4px;width:1px;height:16px;background:#a0a0a0"></div>
<div class="abs" style="left:1339px;top:4px;width:1px;height:16px;background:#a0a0a0"></div>
<span class="abs" style="left:1268px;top:6px;font-size:11px;line-height:14px;letter-spacing:.08px;white-space:pre">263:34</span>
<span class="abs" style="left:1344px;top:6px;font-size:11px;line-height:14px;letter-spacing:-.4px;white-space:pre">INS</span>
</div>
<div id="taskbar"><div class="abs" style="left:0;top:2px;width:1366px;height:38px;background:linear-gradient(180deg,rgba(0,8,60,.16) 0,rgba(0,8,60,.06) 50%,rgba(0,0,0,0) 80%)"></div>
<div class="abs" style="left:0;top:0;width:1366px;height:1px;background:#08163a"></div>
<div class="abs" style="left:0;top:1px;width:1366px;height:1px;background:linear-gradient(90deg,#5a84c8,#4f7cc2 600px,#5580c4 1366px)"></div>
<!-- diagonal glass streaks -->
<div class="abs" style="left:540px;top:2px;width:640px;height:38px;background:linear-gradient(30deg,rgba(255,255,255,.035) 0,rgba(255,255,255,.04) 16.600%,rgba(255,255,255,0) 23.600%,rgba(255,255,255,0) 27.600%,rgba(255,255,255,.055) 29.600%,rgba(255,255,255,.03) 38.600%,rgba(255,255,255,0) 44.600%,rgba(255,255,255,0) 54.200%,rgba(255,255,255,.055) 56.200%,rgba(255,255,255,.03) 64.600%,rgba(255,255,255,0) 71.600%,rgba(255,255,255,0) 100%)"></div>
<!-- start orb -->
<svg class="abs" style="left:6px;top:-1px" width="42" height="42" viewBox="0 0 42 42">
<defs>
<radialGradient id="orb" cx=".5" cy="1" r=".85"><stop offset="0" stop-color="#22e4ff"/><stop offset=".22" stop-color="#12a8e0"/><stop offset=".5" stop-color="#0d64a8"/><stop offset="1" stop-color="#0b3c78"/></radialGradient>
<linearGradient id="orbh" x1="0" y1="0" x2="0" y2="1"><stop offset="0" stop-color="#c4cede"/><stop offset=".35" stop-color="#9aaac4"/><stop offset="1" stop-color="#5f7ca4"/></linearGradient>
<linearGradient id="fr" x1="0" y1="0" x2="1" y2="1"><stop offset="0" stop-color="#e2421a"/><stop offset="1" stop-color="#f9a02c"/></linearGradient>
<linearGradient id="fg" x1="1" y1="0" x2="0" y2="1"><stop offset="0" stop-color="#5aa028"/><stop offset="1" stop-color="#c4de84"/></linearGradient>
<linearGradient id="fb" x1="0" y1="1" x2="1" y2="0"><stop offset="0" stop-color="#1478cc"/><stop offset="1" stop-color="#7cc0ec"/></linearGradient>
<linearGradient id="fy" x1="0" y1="0" x2="1" y2="1"><stop offset="0" stop-color="#fcd654"/><stop offset="1" stop-color="#f79a12"/></linearGradient>
</defs>
<circle cx="21" cy="21" r="18.600" fill="none" stroke="#a8c0e4" stroke-width=".9" opacity=".75"/>
<circle cx="21" cy="21" r="17.400" fill="url(#orb)"/>
<path d="M3.800 20.500A17.200 17.200 0 0 1 38.200 20.500C29 23.600 13 23.600 3.800 20.500Z" fill="url(#orbh)" opacity=".92"/>
<path d="M4.600 17A16.600 16.600 0 0 1 37.400 17" fill="none" stroke="#e4eaf2" stroke-width="1.100" opacity=".7"/>
<g transform="translate(21.300 21.300)">
<path d="M-7.300 -9.400C-4.600 -10.800 -2.200 -10.600 0.600 -9.300L-0.900 -1.400C-3.600 -2.700 -6 -2.800 -8.900 -1.500Z" fill="url(#fr)"/>
<path d="M1.800 -8.800C4.600 -7.400 7.200 -7.400 10 -8.600L8.400 -0.600C5.600 0.600 3.200 0.500 0.300 -0.900Z" fill="url(#fg)"/>
<path d="M-9.200 0C-6.400 -1.400 -3.800 -1.200 -1.100 0.100L-2.600 7.900C-5.400 6.700 -7.900 6.600 -10.700 7.900Z" fill="url(#fb)"/>
<path d="M0 0.600C2.800 2 5.400 2 8.200 0.800L6.600 8.700C3.800 9.900 1.300 9.900 -1.500 8.500Z" fill="url(#fy)"/>
</g>
</svg>
<!-- task buttons -->
<div class="tb" style="left:60px;width:158px"></div>
<div class="tb" style="left:222px;width:158px"></div>
<div class="tb act" style="left:384px;width:158px"></div>
<!-- chrome icon -->
<svg class="abs" style="left:70px;top:5px" width="30" height="30" viewBox="0 0 30 30">
<defs>
<linearGradient id="chr" x1="0" y1="0" x2="0" y2="1"><stop offset="0" stop-color="#f0503c"/><stop offset="1" stop-color="#d81c14"/></linearGradient>
<linearGradient id="chy" x1="0" y1="0" x2="0" y2="1"><stop offset="0" stop-color="#fdd70a"/><stop offset="1" stop-color="#f6b40a"/></linearGradient>
<linearGradient id="chg" x1="0" y1="0" x2="0" y2="1"><stop offset="0" stop-color="#46b848"/><stop offset="1" stop-color="#2f9e3a"/></linearGradient>
<linearGradient id="chb" x1="0" y1="0" x2="0" y2="1"><stop offset="0" stop-color="#6aaae4"/><stop offset="1" stop-color="#2a74c4"/></linearGradient>
</defs>
<circle cx="15" cy="15" r="13.600" fill="#e0e0e0"/>
<path d="M3.23 7.42 A14 14 0 0 1 27.45 8.60 L15.00 8.60 A6.4 6.4 0 0 0 9.46 18.20 Z" fill="url(#chr)"/>
<path d="M27.45 8.60 A14 14 0 0 1 14.32 28.98 L20.54 18.20 A6.4 6.4 0 0 0 15.00 8.60 Z" fill="url(#chy)"/>
<path d="M14.32 28.98 A14 14 0 0 1 3.23 7.42 L9.46 18.20 A6.4 6.4 0 0 0 20.54 18.20 Z" fill="url(#chg)"/>
<circle cx="15" cy="15" r="6.400" fill="#f8f8f8"/>
<circle cx="15" cy="15" r="5.200" fill="url(#chb)"/>
</svg>
<span class="tl" style="left:105px;letter-spacing:-.05px">scbaisesti.tk/admi...</span>
<!-- filezilla icon -->
<svg class="abs" style="left:231px;top:4px" width="32" height="32" viewBox="0 0 32 32">
<defs><linearGradient id="fzg" x1="0" y1="0" x2="0" y2="1"><stop offset="0" stop-color="#cc0000"/><stop offset="1" stop-color="#930000"/></linearGradient>
<mask id="fzm"><rect width="32" height="32" fill="#fff"/><rect x="4.2" y="0" width="2.600" height="1.100" fill="#000"/><rect x="4.2" y="30.900" width="2.600" height="1.100" fill="#000"/><rect x="0" y="4.2" width="1.100" height="2.600" fill="#000"/><rect x="30.900" y="4.2" width="1.100" height="2.600" fill="#000"/><rect x="11.2" y="0" width="2.600" height="1.100" fill="#000"/><rect x="11.2" y="30.900" width="2.600" height="1.100" fill="#000"/><rect x="0" y="11.2" width="1.100" height="2.600" fill="#000"/><rect x="30.900" y="11.2" width="1.100" height="2.600" fill="#000"/><rect x="18.2" y="0" width="2.600" height="1.100" fill="#000"/><rect x="18.2" y="30.900" width="2.600" height="1.100" fill="#000"/><rect x="0" y="18.2" width="1.100" height="2.600" fill="#000"/><rect x="30.900" y="18.2" width="1.100" height="2.600" fill="#000"/><rect x="25.1" y="0" width="2.600" height="1.100" fill="#000"/><rect x="25.1" y="30.900" width="2.600" height="1.100" fill="#000"/><rect x="0" y="25.1" width="1.100" height="2.600" fill="#000"/><rect x="30.900" y="25.1" width="1.100" height="2.600" fill="#000"/></mask></defs>
<rect width="32" height="32" fill="url(#fzg)" mask="url(#fzm)"/>
<g fill="#fff">
<path d="M9.500 5.500h4.200l-4 19.500h-4.200z"/>
<path d="M9.500 5.500h13l-.8 3.500h-13z"/>
<path d="M8 13h18l-.7 3.300h-18z"/>
<path d="M21 16h5l-9 8.500h-5z"/>
<path d="M12.400 24h13.200l-.8 3.300h-13.200z"/>
</g>
</svg>
<span class="tl" style="left:267px;letter-spacing:-.03px">artur99.net - artur...</span>
<!-- netbeans icon -->
<svg class="abs" style="left:392px;top:3px" width="33" height="34" viewBox="0 0 33 34">
<defs><linearGradient id="nl" x1="0" x2="1"><stop offset="0" stop-color="#7f9fe0"/><stop offset="1" stop-color="#b4c8f2"/></linearGradient>
<linearGradient id="nr" x1="0" x2="1"><stop offset="0" stop-color="#f2f7fa"/><stop offset="1" stop-color="#b9c6d2"/></linearGradient></defs>
<path d="M16.500 2L30.500 8.500V24.500L16.500 32.500L2.500 24.500V8.500Z" fill="#cfe4da" stroke="#1c2050" stroke-width="2.400" stroke-linejoin="round"/>
<path d="M4 9.800L16.500 15.500V30.500L4 23.600Z" fill="url(#nl)"/>
<path d="M16.500 15.500L29 9.800V23.600L16.500 30.500Z" fill="url(#nr)"/>
<path d="M4.300 8.800L16.500 3.400L28.700 8.800L16.500 14.500Z" fill="#c6e0d6"/>
<path d="M4 9.600L16.500 15.300L29 9.600M16.500 15.300V30.500" fill="none" stroke="#e8f4ff" stroke-width="1" opacity=".85"/>
</svg>
<span class="tl" style="left:429px;letter-spacing:-.56px">NetBeans IDE 8.0.1</span>
<!-- tray -->
<span class="tl" style="left:1181px;top:11px;letter-spacing:-1px">EN</span>
<svg class="abs" style="left:1212px;top:18px" width="10" height="6" viewBox="0 0 10 6"><path d="M0.800 5.200L4.800 0.800L8.800 5.200z" fill="#fff"/></svg>
<svg class="abs" style="left:1233px;top:13px" width="16" height="16" viewBox="0 0 16 16">
<circle cx="4.200" cy="4" r="3.300" fill="#84be00"/><circle cx="11.600" cy="11.600" r="3.300" fill="#84be00"/>
<ellipse cx="7.900" cy="7.800" rx="6.300" ry="5.900" fill="#84be00" transform="rotate(40 7.900 7.800)"/>
<path d="M4.800 8l2.200 2.200l4.400-4.600" fill="none" stroke="#fff" stroke-width="1.900"/>
</svg>
<svg class="abs" style="left:1257px;top:14px" width="17" height="13" viewBox="0 0 17 13">
<g fill="#fff" stroke="#05050c" stroke-width=".9"><rect x=".8" y="9.800" width="2.500" height="2.600"/><rect x="3.800" y="7.800" width="2.500" height="4.600"/><rect x="6.800" y="5.800" width="2.500" height="6.600"/><rect x="9.800" y="3.800" width="2.500" height="8.600"/><rect x="12.800" y="1.800" width="2.500" height="10.600"/></g>
</svg>
<span class="tl" style="left:1294px;top:6px;letter-spacing:-.34px">8:19 PM</span>
<span class="tl" style="left:1287px;top:23px;letter-spacing:-.16px">12/11/2014</span>
<div class="abs" style="left:1352px;top:1px;width:14px;height:39px;border-left:1px solid #0a1e4a;background:linear-gradient(160deg,rgba(255,255,255,.34) 0,rgba(255,255,255,.16) 48%,rgba(255,255,255,.03) 52%,rgba(255,255,255,.12) 100%);box-shadow:inset 1px 1px 0 rgba(190,210,240,.6)"></div>
</div>
</body></html>
